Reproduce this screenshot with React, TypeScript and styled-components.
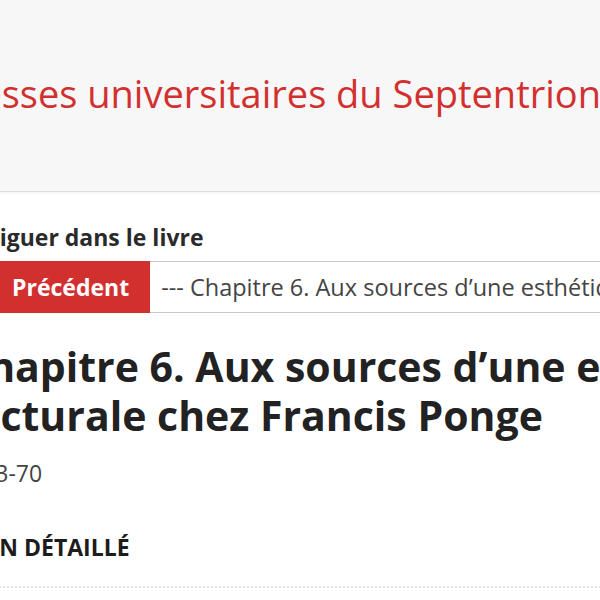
import styled, { createGlobalStyle } from 'styled-components'

const GlobalStyle = createGlobalStyle`
  html, body {
    margin: 0;
    padding: 0;
    background: #fff;
    overflow: hidden;
  }
  body {
    font-family: 'Open Sans', 'Noto Sans', sans-serif;
    color: #333;
  }
`

const Viewport = styled.div`
  width: 600px;
  height: 600px;
  overflow: hidden;
`

// the page is wider than the window and scrolled a little to the right
const Page = styled.div`
  width: 1200px;
  margin-left: -60px;
`

const Masthead = styled.header`
  background: #f7f7f7;
  height: 192px;
  border-bottom: 1px solid #dedede;
  box-shadow: 0 2px 0 #f6f6f6;
  display: flex;
  align-items: center;
  padding: 0 0 6px 2px;
  box-sizing: border-box;
`

const SiteTitle = styled.div`
  font-size: 38px;
  color: #d2302f;
  white-space: nowrap;
`

const Content = styled.main`
  padding: 30px 0 0 16px;
`

const NavLabel = styled.h3`
  margin: 0 0 9px -2px;
  font-size: 23px;
  font-weight: 700;
  color: #2a2a2a;
  line-height: 30px;
`

const NavRow = styled.div`
  display: flex;
  height: 52px;
`

const PrevButton = styled.div`
  background: #d2302f;
  color: #fff;
  font-weight: 700;
  font-size: 23px;
  display: flex;
  align-items: center;
  padding: 0 21px 0 56px;
`

const TocSelect = styled.div`
  flex: 1;
  border: 1px solid #c9c9c9;
  border-left: none;
  display: flex;
  align-items: center;
  padding-left: 11px;
  font-size: 23.5px;
  color: #444;
  white-space: nowrap;
  overflow: hidden;
`

const ChapterTitle = styled.h1`
  margin: 29px 0 0 6px;
  width: 1000px;
  font-size: 41px;
  line-height: 49px;
  font-weight: 700;
  color: #222;
`

const Pages = styled.div`
  margin-top: 17px;
  font-size: 23px;
  line-height: 32px;
  color: #444;
`

const SectionHeading = styled.h3`
  margin: 42px 0 0;
  font-size: 23px;
  line-height: 32px;
  font-weight: 700;
  color: #1c1c1c;
  text-transform: uppercase;
`

const Dotted = styled.div`
  margin-top: 23px;
  border-bottom: 2px dotted #e0e0e0;
`

export default function App() {
  return (
    <Viewport>
      <GlobalStyle />
      <Page>
        <Masthead>
          <SiteTitle>Presses universitaires du Septentrion</SiteTitle>
        </Masthead>
        <Content>
          <NavLabel>Naviguer dans le livre</NavLabel>
          <NavRow>
            <PrevButton>Précédent</PrevButton>
            <TocSelect>--- Chapitre 6. Aux sources d’une esthétique picturale chez Francis Ponge</TocSelect>
          </NavRow>
          <ChapterTitle>
            Chapitre 6. Aux sources d’une esthétique
            <br />
            picturale chez Francis Ponge
          </ChapterTitle>
          <Pages>p. 53-70</Pages>
          <SectionHeading>Plan détaillé</SectionHeading>
          <Dotted />
        </Content>
      </Page>
    </Viewport>
  )
}
